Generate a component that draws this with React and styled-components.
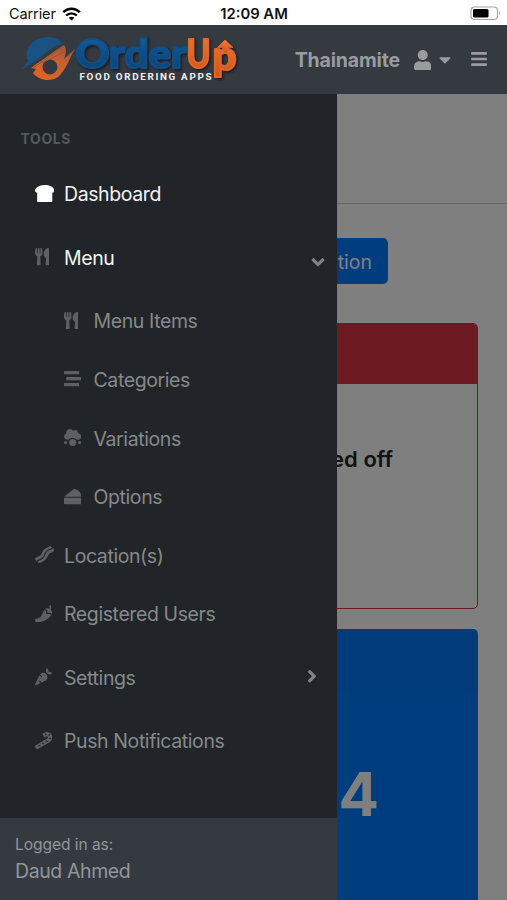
import React from "react";
import styled, { createGlobalStyle } from "styled-components";
import {
  FaAngleDown,
  FaAngleRight,
  FaBacon,
  FaBars,
  FaBreadSlice,
  FaCandyCane,
  FaCaretDown,
  FaCarrot,
  FaCheese,
  FaCloudMeatball,
  FaPepperHot,
  FaStream,
  FaUser,
  FaUtensils,
} from "react-icons/fa";

// width is the glyph width in em, the icons are not all square
const links = [
  { label: "Dashboard", icon: FaBreadSlice, width: 1.125, active: true, lit: true },
  { label: "Menu", icon: FaUtensils, width: 0.8125, active: true, arrow: "down" },
  { label: "Menu Items", icon: FaUtensils, width: 0.8125, nested: true },
  { label: "Categories", icon: FaStream, nested: true },
  { label: "Variations", icon: FaCloudMeatball, nested: true },
  { label: "Options", icon: FaCheese, nested: true },
  { label: "Location(s)", icon: FaBacon, width: 1.125 },
  { label: "Registered Users", icon: FaPepperHot },
  { label: "Settings", icon: FaCarrot, arrow: "right" },
  { label: "Push Notifications", icon: FaCandyCane },
];

const Logo = () => {
  return (
    <LogoSvg viewBox="20 30 222 56" role="img" aria-label="OrderUp">
      <defs>
        <linearGradient id="blue" x1="0" y1="0" x2="0" y2="1">
          <stop offset="0" stopColor="#1c64a0" />
          <stop offset="0.5" stopColor="#0d4f8a" />
          <stop offset="1" stopColor="#0b4173" />
        </linearGradient>
        <linearGradient id="orange" x1="0" y1="0" x2="0" y2="1">
          <stop offset="0" stopColor="#f07a38" />
          <stop offset="1" stopColor="#cf5516" />
        </linearGradient>
        <linearGradient id="flame" x1="1" y1="0" x2="0.3" y2="1">
          <stop offset="0" stopColor="#96543b" />
          <stop offset="0.5" stopColor="#cb6031" />
          <stop offset="1" stopColor="#df6322" />
        </linearGradient>
        <filter id="drop" x="-10%" y="-10%" width="125%" height="135%">
          <feDropShadow dx="1.6" dy="1.6" stdDeviation="0.8" floodColor="#15191d" floodOpacity="0.9" />
        </filter>
      </defs>
      <path
        d="M27 59C25 46 35 37 48 37C54 37 59 39 63 43L53 47C47 51 43 56 37 60L21 70L29 60Z"
        fill="#165487"
      />
      <path d="M28 57L42 43M33 59L52 41M42 55L60 42" stroke="#34495c" strokeWidth="0.8" />
      <path
        fillRule="evenodd"
        d="M64 45C67 49 66 54 64 59L75 49C69 59 66 70 58 77C51 82 39 81 33 73L36 69L31 68C39 62 48 56 55 51ZM50 59.500A7.500 7.500 0 1 0 50 74.500A7.500 7.500 0 1 0 50 59.500Z"
        fill="url(#flame)"
      />
      <path d="M33 68L61 48M42 63L64 52" stroke="#85513f" strokeWidth="0.8" />
      <g filter="url(#drop)" fontFamily="Lato, sans-serif" fontWeight="900" fontSize="39">
        <g fill="url(#blue)" stroke="#115089" strokeWidth="1.8" strokeLinejoin="round">
          <text x="75.500" y="67.500" textLength="34" lengthAdjust="spacingAndGlyphs">O</text>
          <text x="109" y="67.500" textLength="78" lengthAdjust="spacingAndGlyphs">rder</text>
        </g>
        <g fill="url(#orange)" stroke="#e0662a" strokeWidth="1.8" strokeLinejoin="round">
          <text x="186.500" y="67.500" textLength="24" lengthAdjust="spacingAndGlyphs">U</text>
          <text x="212.500" y="70" textLength="24" lengthAdjust="spacingAndGlyphs">p</text>
          <path d="M225 40L233 47.500L227.500 47V53H223V47L217.500 47.500Z" strokeWidth="1" />
        </g>
      </g>
      <Tagline x="79.500" y="79.500" textLength="132">
        FOOD ORDERING APPS
      </Tagline>
    </LogoSvg>
  );
};

const StatusBar = () => {
  return (
    <Status>
      <Carrier>
        Carrier
        <svg width="19" height="14" viewBox="0 0 19 14" fill="none" stroke="#000">
          <path d="M1.200 5.200C6 0.600 13 0.600 17.800 5.200" strokeWidth="2.500" />
          <path d="M4.200 8.500C7.200 5.600 11.800 5.600 14.800 8.500" strokeWidth="2.400" />
          <path d="M9.500 13.500L6.700 10.700C8.300 9.300 10.700 9.300 12.300 10.700Z" fill="#000" stroke="none" />
        </svg>
      </Carrier>
      <Clock>12:09 AM</Clock>
      <BatteryArea>
        <svg width="31" height="15" viewBox="0 0 31 15">
          <rect x="1" y="1" width="26.500" height="12.500" rx="3.500" fill="none" stroke="#a5a5a5" strokeWidth="1.200" />
          <rect x="3" y="3" width="15.500" height="8.500" rx="1.500" />
          <path d="M29 5Q31 7.200 29 9.500Z" fill="#a5a5a5" />
        </svg>
      </BatteryArea>
    </Status>
  );
};

const Sidebar = () => {
  return (
    <SideNav>
      <Heading>TOOLS</Heading>
      {links.map(({ label, icon: Icon, width, active, lit, arrow, nested }) => (
        <NavLink key={label} $active={active} $nested={nested} $tall={!!arrow}>
          <LinkIcon $lit={lit} $width={width || 1}>
            <Icon />
          </LinkIcon>
          <LinkLabel>{label}</LinkLabel>
          {arrow && (
            <Arrow $open={arrow === "down"}>
              {arrow === "down" ? <FaAngleDown /> : <FaAngleRight />}
            </Arrow>
          )}
        </NavLink>
      ))}
      <SideFooter>
        <small>Logged in as:</small>
        <span>Daud Ahmed</span>
      </SideFooter>
    </SideNav>
  );
};

const App = () => {
  return (
    <Screen>
      <GlobalStyle />
      <StatusBar />
      <TopNav>
        <Logo />
        <UserMenu>
          <strong>Thainamite</strong>
          <FaUser />
          <FaCaretDown />
        </UserMenu>
        <Toggle>
          <FaBars />
        </Toggle>
      </TopNav>
      <Body>
        <Content>
          <PageHead />
          <Button>Location</Button>
          <Card>
            <CardHeader />
            <Message>turned off</Message>
          </Card>
          <BlueCard>
            <BlueHeader />
            <Total>4</Total>
          </BlueCard>
        </Content>
        <Backdrop />
        <Sidebar />
      </Body>
    </Screen>
  );
};

export default App;

const GlobalStyle = createGlobalStyle`
  * {
    box-sizing: border-box;
  }
  body {
    margin: 0;
    background: #fff;
    font-family: Inter, "Liberation Sans", sans-serif;
  }
`;

const Screen = styled.div`
  display: flex;
  flex-direction: column;
  width: 507px;
  height: 900px;
  overflow: hidden;
`;

const Status = styled.header`
  display: grid;
  grid-template-columns: 1fr auto 1fr;
  align-items: center;
  height: 25px;
  padding: 2px 6px 0 9px;
  color: #111;
  font-size: 14.5px;
`;

const Carrier = styled.div`
  display: flex;
  align-items: center;
  gap: 6px;
  letter-spacing: -0.1px;
`;

const Clock = styled.div`
  margin-left: -2px;
  font-weight: 600;
  font-size: 14.8px;
`;

const BatteryArea = styled.div`
  display: flex;
  justify-content: flex-end;
`;

const TopNav = styled.nav`
  display: flex;
  align-items: center;
  height: 69px;
  padding: 0 19px 0 20px;
  background: #343a40;
  color: #999c9f;
`;

const LogoSvg = styled.svg`
  width: 222px;
  height: 56px;
  margin-top: -4px;
`;

const Tagline = styled.text`
  fill: #f1f1f1;
  font-family: Roboto, sans-serif;
  font-size: 9.8px;
  font-weight: 700;
`;

const UserMenu = styled.div`
  display: flex;
  align-items: center;
  margin-left: auto;
  strong {
    margin-right: 13.5px;
    font-size: 19.5px;
    font-weight: 700;
    letter-spacing: -0.15px;
  }
  svg {
    width: 17.5px;
    height: 20px;
  }
  svg + svg {
    width: 12px;
    height: 19px;
    margin-left: 8px;
  }
`;

const Toggle = styled.div`
  display: flex;
  margin-left: 19px;
  padding-bottom: 2px;
  font-size: 18px;
`;

const Body = styled.div`
  position: relative;
  flex: 1;
  overflow: hidden;
`;

const Content = styled.main`
  display: flex;
  flex-direction: column;
  height: 100%;
  padding: 0 29px 0 30px;
  background: #fff;
`;

const PageHead = styled.div`
  flex: none;
  height: 110px;
  margin: 0 -29px 34px -30px;
  border-bottom: 1.4px solid #d0d0d0;
`;

const Button = styled.div`
  flex: none;
  display: flex;
  align-items: center;
  justify-content: flex-end;
  width: 358px;
  height: 46px;
  padding: 1px 16px 0 0;
  border-radius: 5px;
  background: #007bff;
  color: #fff;
  font-size: 19.5px;
`;

const Card = styled.section`
  flex: none;
  height: 286px;
  margin-top: 39px;
  border: 1.4px solid #dc3545;
  border-radius: 5px;
  overflow: hidden;
`;

const CardHeader = styled.div`
  height: 60px;
  background: #dc3545;
`;

const Message = styled.h4`
  margin: 59px 84px 0 0;
  color: #212529;
  font-size: 22px;
  font-weight: 600;
  line-height: 32px;
  text-align: right;
`;

const BlueCard = styled.section`
  flex: 1;
  margin-top: 20px;
  border-radius: 5px 5px 0 0;
  background: #007bff;
  overflow: hidden;
`;

const BlueHeader = styled.div`
  height: 64px;
  background: rgba(0, 0, 0, 0.03);
`;

const Total = styled.div`
  margin: 71px 99px 0 0;
  color: #fff;
  font-size: 60px;
  font-weight: 700;
  line-height: 60px;
  text-align: right;
`;

const Backdrop = styled.div`
  position: absolute;
  inset: 0;
  background: rgba(0, 0, 0, 0.5);
`;

const SideNav = styled.aside`
  position: absolute;
  top: 0;
  left: 0;
  display: flex;
  flex-direction: column;
  width: 337px;
  height: 100%;
  background: #212529;
`;

const Heading = styled.div`
  height: 71.2px;
  padding: 36px 20.5px 0;
  color: #55595c;
  font-size: 14px;
  font-weight: 700;
  line-height: 18px;
  letter-spacing: 0.6px;
`;

const NavLink = styled.a`
  display: flex;
  align-items: center;
  height: ${(props) => (props.$tall ? "68.4px" : "58.6px")};
  padding-left: ${(props) => (props.$nested ? "64px" : "34.5px")};
  padding-right: 12px;
  color: ${(props) => (props.$active ? "#f3f4f4" : "#86898b")};
  font-size: 19.5px;
`;

const LinkIcon = styled.span`
  display: flex;
  width: 29.5px;
  padding-bottom: 2px;
  color: ${(props) => (props.$lit ? "#fff" : "#5c6063")};
  font-size: 17.3px;
  svg {
    width: ${(props) => props.$width}em;
  }
`;

const LinkLabel = styled.span`
  letter-spacing: -0.4px;
  white-space: nowrap;
`;

const Arrow = styled.span`
  display: flex;
  margin-left: auto;
  margin-right: ${(props) => (props.$open ? "0" : "8px")};
  padding-top: ${(props) => (props.$open ? "8px" : "0")};
  padding-bottom: ${(props) => (props.$open ? "0" : "3px")};
  color: #808386;
  font-size: 20.5px;
  svg {
    width: ${(props) => (props.$open ? "14px" : "10px")};
  }
`;

const SideFooter = styled.footer`
  display: flex;
  flex-direction: column;
  height: 82px;
  margin-top: auto;
  padding: 15px 15px 0;
  background: #343a40;
  color: #93969a;
  font-size: 19.5px;
  letter-spacing: -0.4px;
  line-height: 29px;
  small {
    font-size: 15.6px;
    letter-spacing: -0.08px;
    line-height: 24px;
  }
`;
